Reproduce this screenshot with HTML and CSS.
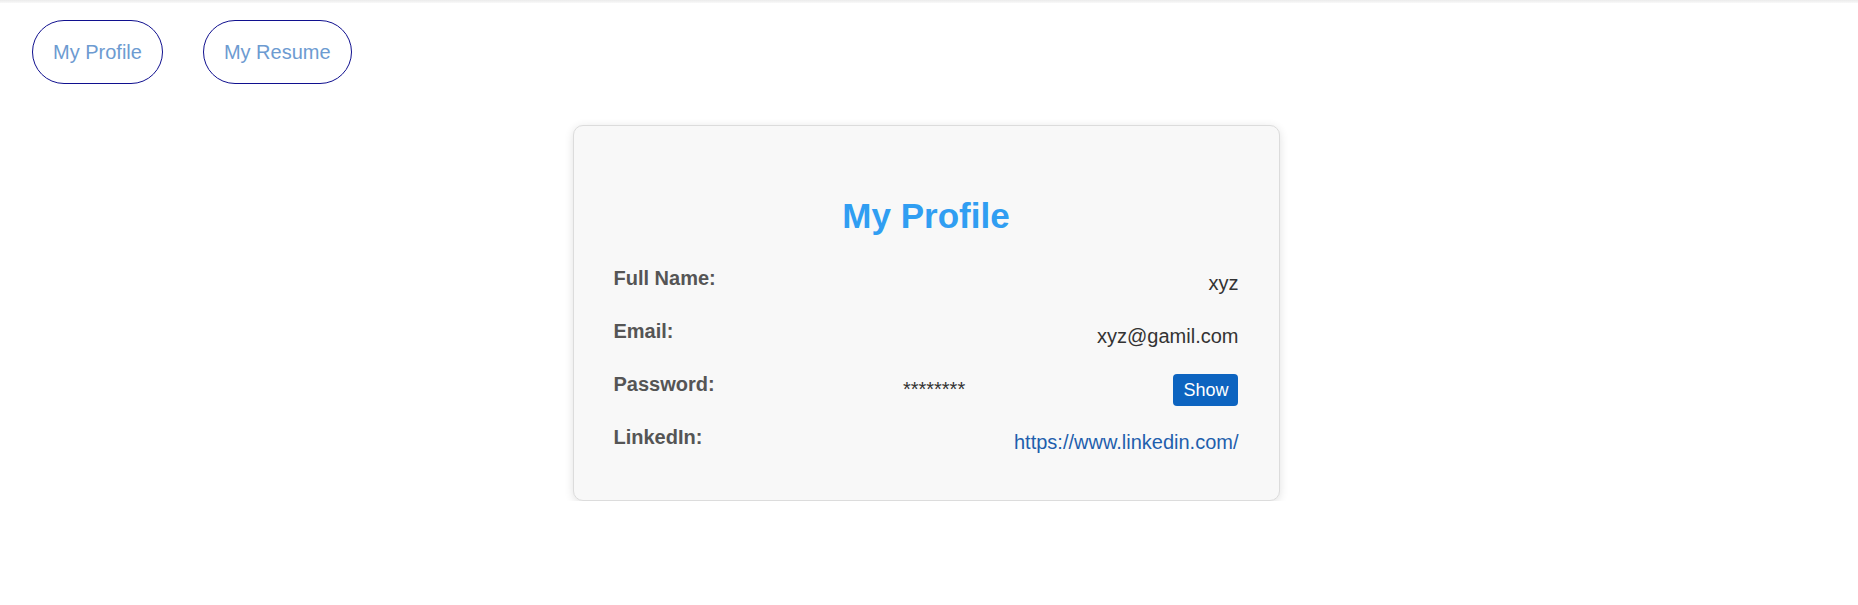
FILE: index.html
```html
<!DOCTYPE html>
<html lang="en">
<head>
<meta charset="utf-8">
<title>My Profile</title>
<link rel="stylesheet" href="styles.css">
</head>
<body>
<div class="topbar"></div>
<nav class="nav">
  <button class="nav-btn">My Profile</button>
  <button class="nav-btn">My Resume</button>
</nav>
<main class="main">
  <section class="card">
    <h1 class="title">My Profile</h1>
    <div class="rows">
      <div class="row">
        <span class="label">Full Name:</span>
        <span class="value">xyz</span>
      </div>
      <div class="row">
        <span class="label">Email:</span>
        <span class="value">xyz@gamil.com</span>
      </div>
      <div class="row">
        <span class="label">Password:</span>
        <span class="value stars">********</span>
        <button class="show-btn">Show</button>
      </div>
      <div class="row">
        <span class="label">LinkedIn:</span>
        <a class="value link" href="#">https://www.linkedin.com/</a>
      </div>
    </div>
  </section>
</main>
</body>
</html>
```

FILE: styles.css
```css
html, body {
  margin: 0;
  padding: 0;
  background: #ffffff;
  font-family: "Liberation Sans", Arial, sans-serif;
}

.topbar {
  height: 3px;
  background: linear-gradient(#ebebeb, #f9f9f9);
}

.nav {
  display: flex;
  gap: 40px;
  padding: 17px 0 0 32px;
}

.nav-btn {
  height: 64px;
  box-sizing: border-box;
  padding: 0 20px;
  border: 1px solid #10108f;
  border-radius: 32px;
  background: #ffffff;
  color: #6d9bd1;
  font-family: "Liberation Sans", Arial, sans-serif;
  font-size: 20px;
  cursor: pointer;
}

.main {
  padding: 41px 6px 0 0;
}

.card {
  width: 707px;
  box-sizing: border-box;
  margin: 0 auto;
  padding: 70px 40px 51px;
  background: #f8f8f8;
  border: 1px solid #dcdcdc;
  border-radius: 10px;
  box-shadow: 0 2px 10px rgba(0, 0, 0, 0.12);
}

.title {
  margin: 0 0 31px;
  text-align: center;
  font-size: 35px;
  font-weight: bold;
  line-height: normal;
  color: #309ef2;
}

.rows {
  display: flex;
  flex-direction: column;
  gap: 30px;
}

.row {
  height: 23px;
  display: flex;
  justify-content: space-between;
  align-items: flex-start;
}

.label {
  font-size: 20px;
  font-weight: bold;
  line-height: 23px;
  color: #555555;
}

.value {
  font-size: 20px;
  line-height: 23px;
  padding-top: 5px;
  color: #333333;
}

.link {
  color: #1f5fad;
  text-decoration: none;
}

.show-btn {
  margin: 1px 0 0 20px;
  padding: 6px 10px;
  border: none;
  border-radius: 4px;
  background: #0d64c0;
  color: #ffffff;
  font-family: "Liberation Sans", Arial, sans-serif;
  font-size: 18px;
  line-height: 20px;
  cursor: pointer;
}
```
